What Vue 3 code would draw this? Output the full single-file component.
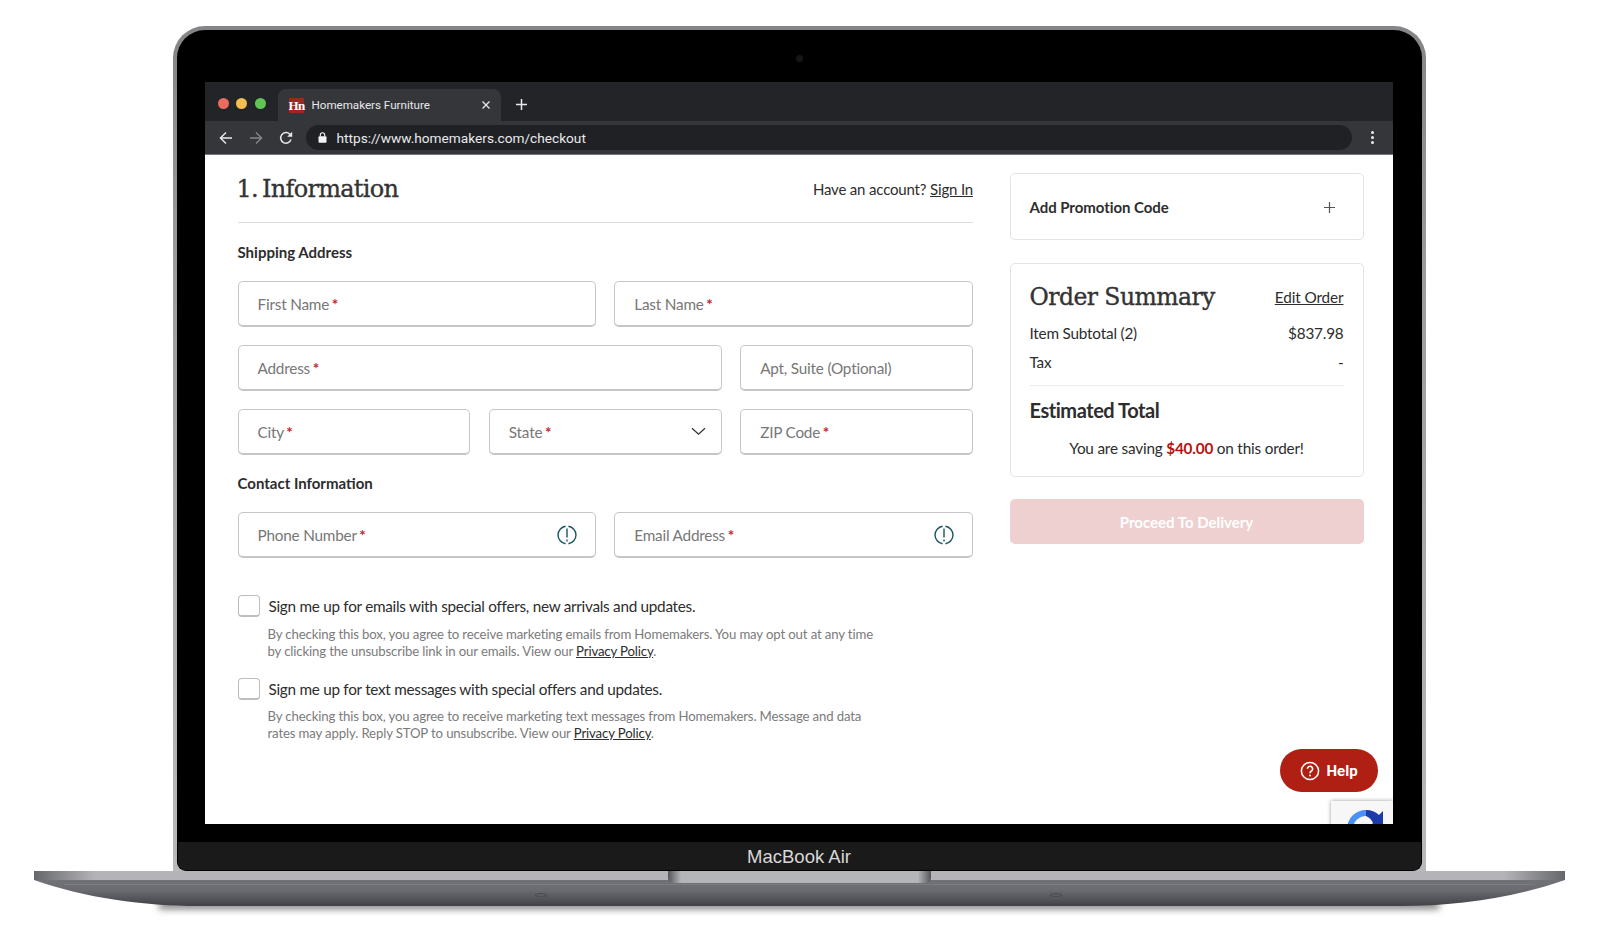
<template>
  <div class="stage">
    <div class="lid">
      <div class="camera-row"><span class="camera"></span></div>

      <div class="screen">
        <div class="tabstrip">
          <div class="lights">
            <span class="light red"></span>
            <span class="light yellow"></span>
            <span class="light green"></span>
          </div>
          <div class="tab">
            <span class="favicon">Hn</span>
            <span class="tab-title">Homemakers Furniture</span>
            <svg class="tab-close" width="10" height="10" viewBox="0 0 10 10">
              <path d="M1.5 1.5l7 7M8.5 1.5l-7 7" stroke="#e8eaed" stroke-width="1.3" fill="none" />
            </svg>
          </div>
          <svg class="new-tab" width="13" height="13" viewBox="0 0 13 13">
            <path d="M6.5 1v11M1 6.5h11" stroke="#e8eaed" stroke-width="1.5" fill="none" />
          </svg>
        </div>

        <div class="toolbar">
          <svg class="nav-icon" width="14" height="14" viewBox="0 0 14 14">
            <path d="M13 7H1.6M7 1.4L1.4 7 7 12.6" stroke="#e8eaed" stroke-width="1.4" fill="none" />
          </svg>
          <svg class="nav-icon" width="14" height="14" viewBox="0 0 14 14">
            <path d="M1 7h11.4M7 1.4L12.6 7 7 12.6" stroke="#85878a" stroke-width="1.4" fill="none" />
          </svg>
          <svg class="nav-icon" width="14" height="14" viewBox="0 0 14 14">
            <path d="M12 8.6A5.3 5.3 0 1 1 10.8 3.2L12.6 5" stroke="#e8eaed" stroke-width="1.5" fill="none" />
            <path d="M13.2 0.8v5h-5z" fill="#e8eaed" />
          </svg>
          <div class="omnibox">
            <svg width="9" height="11" viewBox="0 0 9 11">
              <path d="M2.3 4.5V3a2.2 2.2 0 0 1 4.4 0v1.5" stroke="#f1f3f4" stroke-width="1.1" fill="none" />
              <rect x="0.5" y="4.3" width="8" height="6.4" rx="1" fill="#f1f3f4" />
            </svg>
            <span class="url">https://www.homemakers.com/checkout</span>
          </div>
          <div class="menu-dots"><i></i><i></i><i></i></div>
        </div>

        <div class="page">
          <div class="form-col">
            <div class="form-head">
              <h1>1. Information</h1>
              <p class="account">Have an account? <a>Sign In</a></p>
            </div>

            <h2>Shipping Address</h2>
            <div class="fields">
              <div class="row-two">
                <div class="field"><span>First Name <b>*</b></span></div>
                <div class="field"><span>Last Name <b>*</b></span></div>
              </div>
              <div class="row-three">
                <div class="field span-two"><span>Address <b>*</b></span></div>
                <div class="field"><span>Apt, Suite (Optional)</span></div>
              </div>
              <div class="row-three">
                <div class="field"><span>City <b>*</b></span></div>
                <div class="field">
                  <span>State <b>*</b></span>
                  <svg width="15" height="9" viewBox="0 0 15 9">
                    <path d="M1 1.2l6.5 6 6.5-6" stroke="#333" stroke-width="1.3" fill="none" />
                  </svg>
                </div>
                <div class="field"><span>ZIP Code <b>*</b></span></div>
              </div>
            </div>

            <h2 class="contact-title">Contact Information</h2>
            <div class="row-two">
              <div class="field has-alert" v-for="name in contactFields" :key="name">
                <span>{{ name }} <b>*</b></span>
                <svg width="20" height="20" viewBox="0 0 20 20">
                  <path d="M8.6 1.2A8.9 8.9 0 0 0 8.6 18.8M11.4 1.2A8.9 8.9 0 0 1 11.4 18.8" stroke="#1c5566" stroke-width="1.4" fill="none" />
                  <path d="M10 3.5V12.5M10 14.4v2" stroke="#1c5566" stroke-width="1.4" fill="none" />
                </svg>
              </div>
            </div>

            <div class="consents">
              <div class="consent" v-for="item in consents" :key="item.label">
                <span class="checkbox"></span>
                <div class="consent-body">
                  <p class="consent-label">{{ item.label }}</p>
                  <p class="fine">{{ item.first }}<br />{{ item.second }} <a>Privacy Policy</a>.</p>
                </div>
              </div>
            </div>
          </div>

          <div class="summary-col">
            <div class="card promo">
              <span>Add Promotion Code</span>
              <svg width="11" height="11" viewBox="0 0 11 11">
                <path d="M5.5 0v11M0 5.5h11" stroke="#555" stroke-width="1.2" fill="none" />
              </svg>
            </div>

            <div class="card summary">
              <div class="summary-head">
                <h3>Order Summary</h3>
                <a>Edit Order</a>
              </div>
              <div class="line"><span>Item Subtotal (2)</span><span>$837.98</span></div>
              <div class="line tax"><span>Tax</span><span>-</span></div>
              <div class="total">Estimated Total</div>
              <p class="saving">You are saving <b>$40.00</b> on this order!</p>
            </div>

            <div class="proceed">Proceed To Delivery</div>
          </div>

          <div class="help">
            <svg width="20" height="20" viewBox="0 0 20 20">
              <circle cx="10" cy="10" r="8.6" stroke="#fff" stroke-width="1.5" fill="none" />
              <path d="M7.4 7.8a2.6 2.6 0 1 1 4 2.2c-.9.6-1.4 1-1.4 2.2" stroke="#fff" stroke-width="1.6" fill="none" />
              <circle cx="10" cy="14.6" r="1" fill="#fff" />
            </svg>
            <span>Help</span>
          </div>

          <div class="recaptcha">
            <svg width="38" height="24" viewBox="0 0 38 24">
              <path d="M19 11A13 13 0 0 0 6 24H0A19 19 0 0 1 19 5z" fill="#4a90f5" />
              <path d="M19 5a19 19 0 0 1 13 5l4-4v18H21l5-6a13 13 0 0 0-7-7z" fill="#1c3aa9" />
              <path d="M8 24a11 11 0 0 1 20 0z" fill="#f1f1f1" />
            </svg>
          </div>
        </div>
      </div>

      <div class="bezel-gap"></div>
      <div class="bezel">MacBook Air</div>
    </div>

    <div class="base">
      <svg width="1531" height="52" viewBox="0 0 1531 52">
        <defs>
          <linearGradient id="body" x1="0" y1="0" x2="0" y2="1">
            <stop offset="0" stop-color="#77787c" />
            <stop offset="0.55" stop-color="#6a6b70" />
            <stop offset="1" stop-color="#414247" />
          </linearGradient>
          <linearGradient id="strip" x1="0" y1="0" x2="1" y2="0">
            <stop offset="0" stop-color="#66676b" />
            <stop offset="0.04" stop-color="#b4b4b8" />
            <stop offset="0.96" stop-color="#b4b4b8" />
            <stop offset="1" stop-color="#66676b" />
          </linearGradient>
          <linearGradient id="notch" x1="0" y1="0" x2="1" y2="0">
            <stop offset="0" stop-color="#55565a" />
            <stop offset="0.05" stop-color="#b4b5b8" />
            <stop offset="0.95" stop-color="#b4b5b8" />
            <stop offset="1" stop-color="#55565a" />
          </linearGradient>
          <filter id="soft" x="-5%" y="-200%" width="110%" height="500%">
            <feGaussianBlur stdDeviation="3.5" />
          </filter>
        </defs>
        <rect x="125" y="31" width="1280" height="7" fill="#777" filter="url(#soft)" />
        <path d="M0 0H1531V9C1480 27 1420 35 1368 35H163C111 35 51 27 0 9z" fill="url(#body)" />
        <rect x="0" y="0" width="1531" height="9" fill="url(#strip)" />
        <rect x="30" y="13" width="1471" height="1" fill="#85868a" opacity="0.6" />
        <path d="M634 0H897V7a5 5 0 0 1-5 5H639a5 5 0 0 1-5-5z" fill="url(#notch)" />
        <ellipse cx="507" cy="24" rx="6" ry="1.5" fill="none" stroke="#4a4b4f" />
        <ellipse cx="1022" cy="24" rx="6" ry="1.5" fill="none" stroke="#4a4b4f" />
      </svg>
    </div>
  </div>
</template>

<script setup>
const contactFields = ['Phone Number', 'Email Address'];

const consents = [
  {
    label: 'Sign me up for emails with special offers, new arrivals and updates.',
    first: 'By checking this box, you agree to receive marketing emails from Homemakers. You may opt out at any time',
    second: 'by clicking the unsubscribe link in our emails. View our'
  },
  {
    label: 'Sign me up for text messages with special offers and updates.',
    first: 'By checking this box, you agree to receive marketing text messages from Homemakers. Message and data',
    second: 'rates may apply. Reply STOP to unsubscribe. View our'
  }
];
</script>

<style>
html,
body {
  margin: 0;
  background: #fff;
}
</style>

<style scoped>
.stage {
  width: 1600px;
  height: 948px;
  overflow: hidden;
  padding: 26px 2px 0 0;
  box-sizing: border-box;
  display: flex;
  flex-direction: column;
  align-items: center;
  background: #fff;
  font-family: Lato, "Liberation Sans", sans-serif;
  color: #2d2d2d;
}

.lid {
  width: 1253px;
  height: 845px;
  flex-shrink: 0;
  box-sizing: border-box;
  padding: 4px 4px 0;
  border-radius: 32px 32px 0 0;
  background: linear-gradient(#858588, #9c9c9f 30%, #b9b9bc);
  display: flex;
  flex-direction: column;
  align-items: center;
}

.camera-row {
  width: 100%;
  height: 52px;
  flex-shrink: 0;
  display: flex;
  align-items: center;
  justify-content: center;
  background: #000;
  border-radius: 28px 28px 0 0;
}

.camera {
  width: 7px;
  height: 7px;
  margin-top: 4px;
  border-radius: 50%;
  background: #14161a;
}

.screen {
  width: 100%;
  height: 742px;
  flex-shrink: 0;
  box-sizing: border-box;
  padding: 0 29px 0 28px;
  background: #000;
  display: flex;
  flex-direction: column;
}

.tabstrip {
  height: 39px;
  flex-shrink: 0;
  background: #232428;
  display: flex;
  align-items: flex-end;
}

.lights {
  width: 73px;
  height: 39px;
  padding: 16px 0 0 13px;
  box-sizing: border-box;
  display: flex;
  gap: 7.5px;
}

.light {
  width: 11px;
  height: 11px;
  border-radius: 50%;
}

.red {
  background: #ec6a5e;
}

.yellow {
  background: #f4bf4f;
}

.green {
  background: #61c554;
}

.tab {
  width: 223px;
  height: 32px;
  box-sizing: border-box;
  padding: 0 10px 0 11px;
  background: #35363a;
  border-radius: 8px 8px 0 0;
  display: flex;
  align-items: center;
}

.favicon {
  width: 15px;
  height: 15px;
  background: #9a2a1b;
  color: #fff;
  font: bold 13px/15px "Liberation Serif", serif;
  letter-spacing: -0.5px;
  text-align: center;
}

.tab-title {
  margin-left: 8px;
  flex: 1;
  color: #e8eaed;
  font: 11.6px Roboto, sans-serif;
  white-space: nowrap;
}

.new-tab {
  margin: 0 0 10px 14px;
}

.toolbar {
  height: 34px;
  flex-shrink: 0;
  box-sizing: border-box;
  background: #35363a;
  border-bottom: 1px solid #77787b;
  padding-left: 14px;
  display: flex;
  align-items: center;
}

.nav-icon {
  margin-right: 16px;
}

.omnibox {
  width: 1046px;
  height: 25px;
  margin-left: -3px;
  padding-left: 12px;
  box-sizing: border-box;
  border-radius: 13px;
  background: #202124;
  display: flex;
  align-items: center;
  gap: 10px;
}

.url {
  color: #e8eaed;
  font: 13.67px Roboto, sans-serif;
  white-space: nowrap;
}

.menu-dots {
  margin-left: 19px;
  display: flex;
  flex-direction: column;
  gap: 2px;
}

.menu-dots i {
  width: 3px;
  height: 3px;
  border-radius: 50%;
  background: #e8eaed;
}

.page {
  flex: 1;
  min-height: 0;
  position: relative;
  overflow: hidden;
  background: #fff;
  padding: 18px 29px 0 33px;
  display: flex;
  gap: 36.5px;
}

.form-col {
  width: 735.5px;
  flex-shrink: 0;
  padding-top: 1px;
}

.form-head {
  height: 49px;
  box-sizing: border-box;
  border-bottom: 1px solid #dcdcdc;
  display: flex;
  justify-content: space-between;
}

h1 {
  margin: 0 0 0 -1px;
  font: 500 24px/30px "DejaVu Serif", serif;
  letter-spacing: -0.7px;
  word-spacing: -3px;
  -webkit-text-stroke: 0.35px #333;
  color: #333;
}

.account {
  margin: 7px 0 0;
  font-size: 15px;
  line-height: 17px;
  letter-spacing: -0.17px;
}

a {
  text-decoration: underline;
}

h2 {
  margin: 20px 0;
  font-size: 15px;
  line-height: 18px;
  font-weight: 700;
  color: #2d2d2d;
}

.contact-title {
  margin: 19px 0 20px;
}

.fields {
  display: flex;
  flex-direction: column;
  gap: 18px;
}

.row-two {
  display: grid;
  grid-template-columns: 1fr 1fr;
  gap: 18px;
}

.row-three {
  display: grid;
  grid-template-columns: repeat(3, 1fr);
  gap: 18.5px;
}

.span-two {
  grid-column: span 2;
}

.field {
  height: 46px;
  box-sizing: border-box;
  padding: 0 15px 0 19px;
  border: 1px solid #c6c6c6;
  border-bottom-width: 2px;
  border-radius: 5px;
  display: flex;
  align-items: center;
  justify-content: space-between;
  font-size: 15.3px;
  letter-spacing: -0.2px;
  color: #777;
}

.has-alert {
  padding-right: 18px;
}

.field b {
  margin-left: -1px;
  color: #c4232b;
  font-weight: 700;
}

.consents {
  margin-top: 37px;
  display: flex;
  flex-direction: column;
  gap: 18px;
}

.consent {
  display: flex;
  gap: 9px;
}

.checkbox {
  width: 22px;
  height: 22px;
  flex-shrink: 0;
  box-sizing: border-box;
  border: 1px solid #bdbdbd;
  border-bottom-width: 2px;
  border-radius: 4px;
}

.consent-body {
  flex: 1;
}

.consent-label {
  margin: 0 0 8.5px;
  font-size: 15.3px;
  line-height: 22px;
  white-space: nowrap;
  letter-spacing: -0.28px;
}

.fine {
  margin: 0 0 0 -1px;
  font-size: 13.2px;
  line-height: 17px;
  letter-spacing: -0.14px;
  color: #7b7b7b;
  white-space: nowrap;
}

.fine a {
  color: #2d2d2d;
}

.summary-col {
  width: 354px;
  flex-shrink: 0;
}

.card {
  box-sizing: border-box;
  border: 1px solid #e3e3e3;
  border-radius: 5px;
}

.promo {
  height: 67px;
  padding: 1px 28px 0 19px;
  display: flex;
  align-items: center;
  justify-content: space-between;
  font-size: 15px;
  font-weight: 700;
  letter-spacing: -0.05px;
}

.summary {
  height: 214px;
  margin-top: 23px;
  padding: 17px 19px 0;
}

.summary-head {
  display: flex;
  justify-content: space-between;
  align-items: center;
  height: 32px;
  font-size: 15.3px;
  letter-spacing: -0.1px;
}

h3 {
  margin: 0;
  font: 500 23.5px/32px "DejaVu Serif", serif;
  letter-spacing: -0.55px;
  -webkit-text-stroke: 0.35px #333;
  color: #333;
}

.line {
  display: flex;
  justify-content: space-between;
  font-size: 15.3px;
  line-height: 20px;
  letter-spacing: -0.2px;
}

.summary-head + .line {
  margin-top: 10px;
}

.tax {
  margin-top: 9px;
  padding-bottom: 13px;
  border-bottom: 1px solid #ececec;
}

.total {
  margin-top: 11px;
  font-size: 20px;
  line-height: 26px;
  font-weight: 700;
  letter-spacing: -0.45px;
}

.saving {
  margin: 15px 0 0;
  text-align: center;
  font-size: 15.3px;
  line-height: 20px;
  letter-spacing: -0.19px;
}

.saving b {
  color: #b8120f;
}

.proceed {
  height: 45px;
  margin-top: 22px;
  border-radius: 5px;
  background: #efd0d0;
  color: #fff;
  display: flex;
  align-items: center;
  justify-content: center;
  font-size: 15px;
  font-weight: 700;
}

.help {
  position: absolute;
  left: 1075px;
  top: 594px;
  width: 98px;
  height: 43px;
  box-sizing: border-box;
  padding-left: 20px;
  border-radius: 22px;
  background: #b01f14;
  color: #fff;
  display: flex;
  align-items: center;
  gap: 7px;
  font: 700 15px Roboto, sans-serif;
}

.recaptcha {
  position: absolute;
  right: 0;
  top: 646px;
  width: 62px;
  height: 30px;
  padding: 4px 0 0 16px;
  box-sizing: border-box;
  background: #f7f7f7;
  box-shadow: 0 0 4px rgba(0, 0, 0, 0.4);
}

.bezel-gap {
  width: 100%;
  height: 18px;
  flex-shrink: 0;
  background: #000;
}

.bezel {
  width: 100%;
  height: 29px;
  flex-shrink: 0;
  box-sizing: border-box;
  background: #1a1a1a;
  border: 1px solid #000;
  border-top: 0;
  border-radius: 0 0 9px 9px;
  color: #d8d8d8;
  font: 18.5px/30px "Liberation Sans", sans-serif;
  text-align: center;
}

.base {
  height: 52px;
  flex-shrink: 0;
}

.base svg {
  display: block;
}
</style>
